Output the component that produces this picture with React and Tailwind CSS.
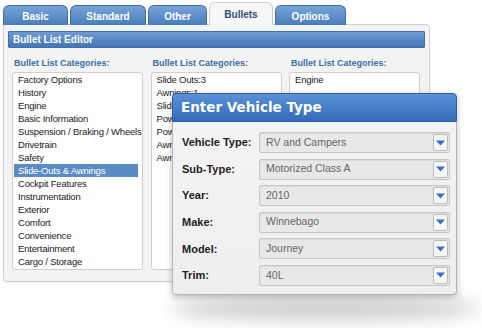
const tabs = [
  { label: 'Basic', w: 'w-[65px]' },
  { label: 'Standard', w: 'w-[76px]' },
  { label: 'Other', w: 'w-[59px]' },
  { label: 'Bullets', w: 'w-[64px]', active: true },
  { label: 'Options', w: 'w-[71px]' },
];

const categories = [
  'Factory Options',
  'History',
  'Engine',
  'Basic Information',
  'Suspension / Braking / Wheels',
  'Drivetrain',
  'Safety',
  'Slide-Outs & Awnings',
  'Cockpit Features',
  'Instrumentation',
  'Exterior',
  'Comfort',
  'Convenience',
  'Entertainment',
  'Cargo / Storage',
];

const slideItems = [
  'Slide Outs:3',
  'Awnings:1',
  'Slide Out Toppers',
  'Power Awning',
  'Power Slides',
  'Awning Lights',
  'Awning Cover',
];

const vehicle = [
  ['Vehicle Type:', 'RV and Campers'],
  ['Sub-Type:', 'Motorized Class A'],
  ['Year:', '2010'],
  ['Make:', 'Winnebago'],
  ['Model:', 'Journey'],
  ['Trim:', '40L'],
];

function ListBox({ items, selected }) {
  return (
    <div className="h-[198px] overflow-hidden rounded-[3px] border border-[#cfcfcf] bg-white pl-[1px]">
      {items.map(item => (
        <div
          key={item}
          className={
            item === selected
              ? 'h-[13px] w-[124px] bg-[#5b8bc4] pl-[4px] text-[9.5px] leading-[13px] tracking-[-0.2px] text-white'
              : 'h-[13px] whitespace-nowrap pl-[4px] text-[9.5px] leading-[13px] tracking-[-0.2px] text-[#1a1a1a]'
          }
        >
          {item}
        </div>
      ))}
    </div>
  );
}

function Column({ items, selected }) {
  return (
    <div className="flex flex-col">
      <div className="mb-[2px] mt-[2px] h-[14px] pl-[2px] text-[9px] font-bold leading-[14px] text-[#3a6ca6]">
        Bullet List Categories:
      </div>
      <ListBox items={items} selected={selected} />
    </div>
  );
}

function Select({ value }) {
  return (
    <div className="flex h-[21px] items-center rounded-[2px] border border-[#c6c6c6] bg-[#e8e8e8] pl-[6px] pr-[1px] shadow-[inset_0_1px_1px_rgba(0,0,0,0.06)]">
      <span className="flex-1 text-[10.5px] text-[#666]">{value}</span>
      <div className="flex h-[17px] w-[15px] items-center justify-center rounded-[2px] border border-[#bcbcbc] bg-[#f6f6f6]">
        <svg width="9" height="6" viewBox="0 0 9 6">
          <path d="M0 0.5h9L4.5 5.5z" fill="#3570c2" />
        </svg>
      </div>
    </div>
  );
}

export default function App() {
  return (
    <div className="relative h-[328px] w-[482px] overflow-hidden bg-white font-['Liberation_Sans',Arial,sans-serif]">
      <div className="pl-[3px] pt-[3px]">
        {/* Tabs */}
        <div className="relative z-10 flex h-[22px] items-end gap-[2px]">
          {tabs.map(t =>
            t.active ? (
              <div
                key={t.label}
                className={`${t.w} flex h-[23px] items-center justify-center rounded-t-[6px] border border-b-0 border-[#cdcdcd] bg-[#f7f7f7] pt-[1px] text-[10px] font-bold text-[#2e4f7d]`}
              >
                {t.label}
              </div>
            ) : (
              <div
                key={t.label}
                className={`${t.w} flex h-[20px] items-center justify-center rounded-t-[6px] border border-b-0 border-[#3f6ea8] bg-gradient-to-b from-[#77a3d8] to-[#4a7dbd] pt-[1px] text-[10px] font-bold text-white`}
              >
                {t.label}
              </div>
            )
          )}
        </div>

        {/* Panel */}
        <div className="-mt-[1px] h-[258px] w-[427px] rounded-b-[4px] rounded-tr-[4px] border border-[#d2d2d2] bg-[#f3f3f3] px-[4px] pt-[6px] shadow-[0_1px_2px_rgba(0,0,0,0.08)]">
          <div className="flex h-[17px] items-center rounded-[1px] border border-[#3f70ad] bg-gradient-to-b from-[#6d9bd2] to-[#4576b6] pl-[4px] text-[10px] font-bold text-white">
            Bullet List Editor
          </div>
          <div className="mt-[6px] grid grid-cols-[131px_131px_131px] gap-x-[7.5px] pl-[4px]">
            <Column items={categories} selected="Slide-Outs & Awnings" />
            <Column items={slideItems} />
            <Column items={['Engine']} />
          </div>
        </div>
      </div>

      {/* Modal shadow */}
      <div className="absolute left-[170px] top-[296px] h-[24px] w-[310px] rounded-[50%] bg-black/20 blur-[9px]" />

      {/* Modal */}
      <div className="absolute left-[172px] top-[93px] w-[285px] rounded-[4px] shadow-[0_2px_6px_rgba(0,0,0,0.25)]">
        <div className="flex h-[29px] items-center rounded-t-[4px] border border-[#2c5fa6] bg-gradient-to-b from-[#5a91d8] to-[#346bbb] pl-[8px] font-['DejaVu_Sans',Verdana,sans-serif] text-[13.5px] font-bold text-white">
          Enter Vehicle Type
        </div>
        <div className="flex flex-col gap-[5.6px] rounded-b-[4px] border border-t-0 border-[#b4b4b4] bg-gradient-to-b from-[#f3f3f3] to-[#eeeeee] pb-[8px] pl-[9px] pr-[6px] pt-[10px]">
          {vehicle.map(([label, value]) => (
            <div key={label} className="flex items-center">
              <div className="w-[77px] text-[11px] font-bold text-[#222]">{label}</div>
              <div className="flex-1">
                <Select value={value} />
              </div>
            </div>
          ))}
        </div>
      </div>
    </div>
  );
}
